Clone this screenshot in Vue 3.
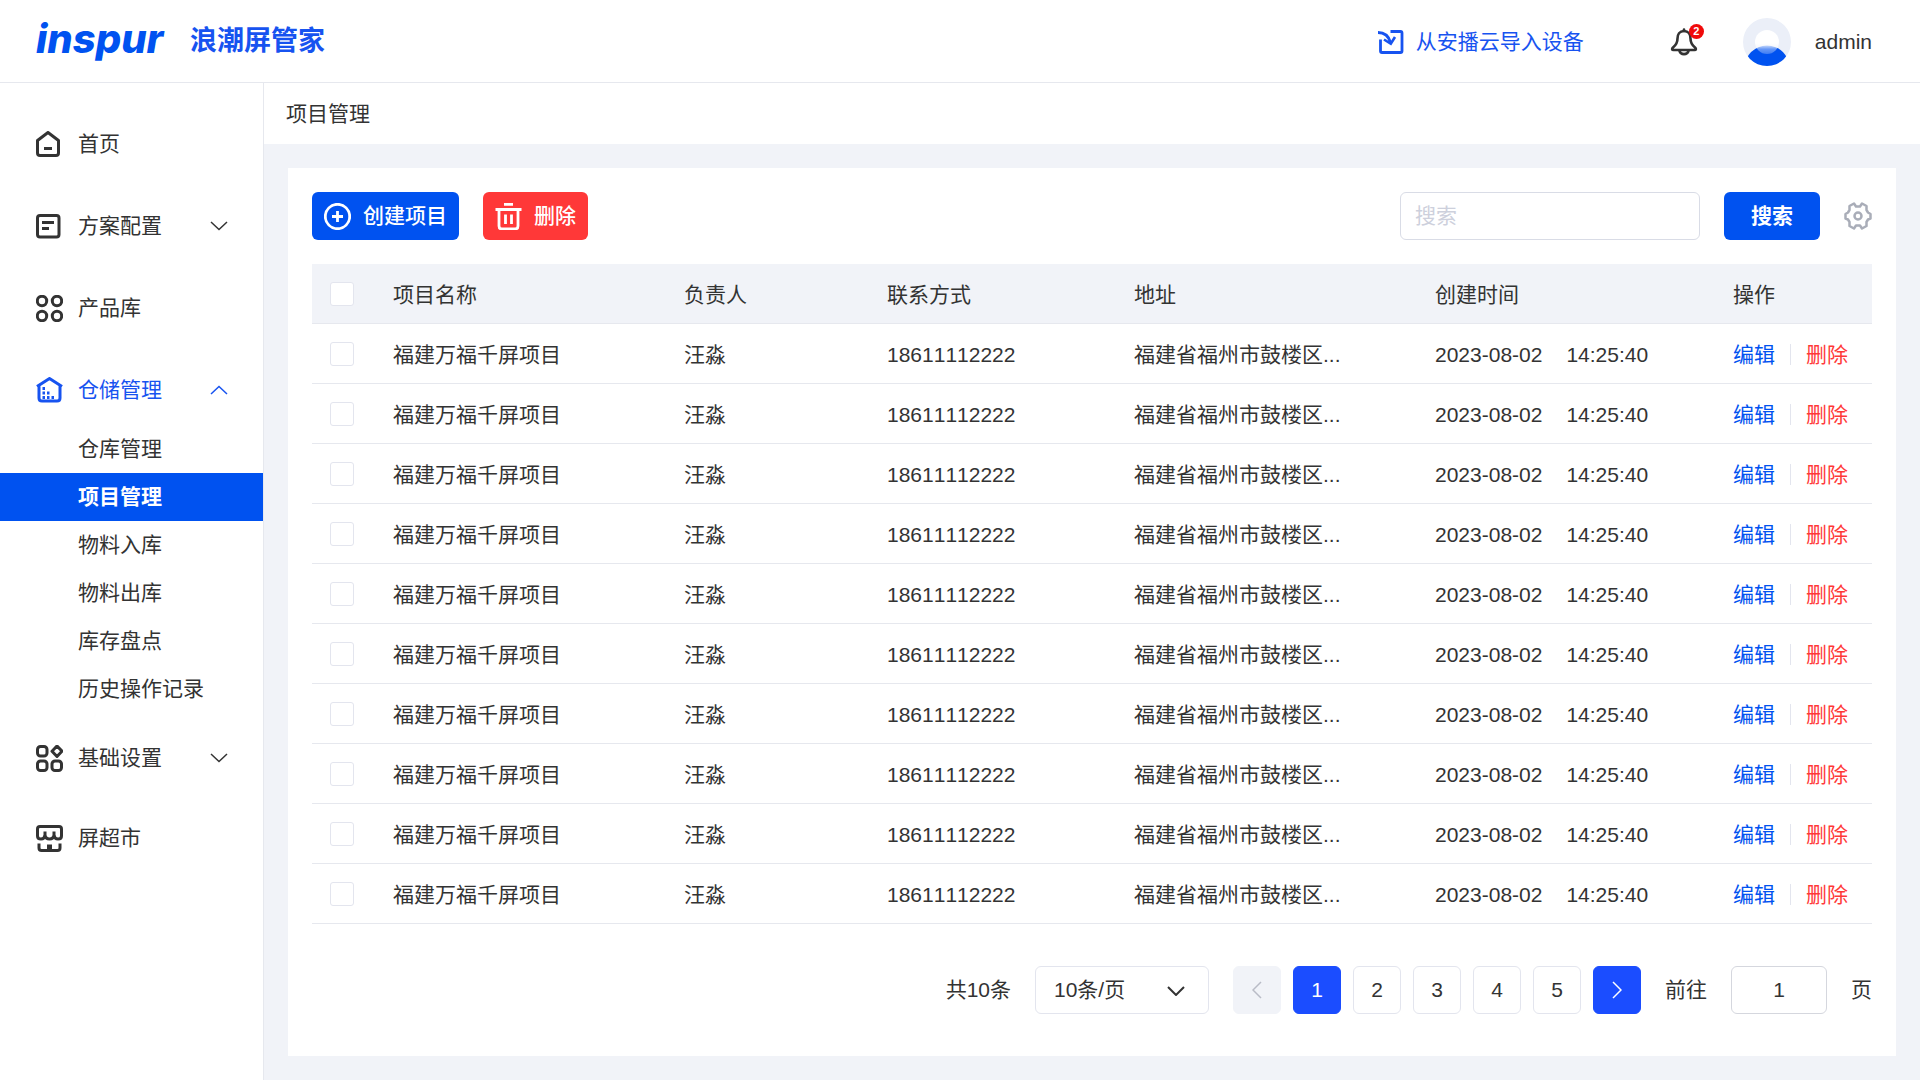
<script setup>
import { ref } from 'vue'

const submenu = ['仓库管理', '项目管理', '物料入库', '物料出库', '库存盘点', '历史操作记录']
const activeSub = ref('项目管理')

const rows = ref(
  Array.from({ length: 10 }, (_, i) => ({
    id: i + 1,
    name: '福建万福千屏项目',
    owner: '汪淼',
    phone: '18611112222',
    address: '福建省福州市鼓楼区...',
    date: '2023-08-02',
    time: '14:25:40',
    checked: false,
  }))
)
const allChecked = ref(false)
const toggleAll = () => rows.value.forEach((r) => (r.checked = allChecked.value))

const keyword = ref('')
const pageSize = ref('10')
const page = ref(1)
const jumpTo = ref('1')
</script>

<template>
  <div class="app">
    <header class="topbar">
      <span class="logo">inspur</span>
      <h1 class="product">浪潮屏管家</h1>
      <a class="import" href="#">
        <svg width="26" height="26" viewBox="0 0 26 26" fill="none" stroke="currentColor" stroke-width="2.800">
          <path d="M12.500 2.500H22.500Q24 2.500 24 4V22Q24 23.500 22.500 23.500H4Q2.500 23.500 2.500 22V10.500" />
          <path d="M0 3.500C6 3.500 10.500 6.500 12.500 13.500" />
          <path d="M6 10.500L12.800 14.800L17 8" stroke-width="2.600" />
        </svg>
        <span>从安播云导入设备</span>
      </a>
      <button class="bell" type="button" aria-label="通知">
        <svg width="28" height="28" viewBox="0 0 28 28" fill="none" stroke="currentColor" stroke-width="2.600" stroke-linejoin="round" stroke-linecap="round">
          <path d="M14 3C9.500 3 7.500 6.500 7.500 10.500C7.500 15.500 5.500 17.500 3 19.500C1.500 21 2 22 3.500 22H24.500C26 22 26.500 21 25 19.500C22.500 17.500 20.500 15.500 20.500 10.500C20.500 6.500 18.500 3 14 3Z" />
          <path d="M14 1.500V3" />
          <path d="M9.500 23C10.500 27.200 17.500 27.200 18.500 23" />
        </svg>
        <span class="badge">2</span>
      </button>
      <div class="user">
        <svg width="48" height="48" viewBox="0 0 48 48">
          <defs>
            <clipPath id="face"><circle cx="24" cy="24" r="24" /></clipPath>
            <linearGradient id="head" x1="0" y1="0" x2="0" y2="1">
              <stop offset="0" stop-color="#fff" />
              <stop offset=".55" stop-color="#fff" />
              <stop offset=".8" stop-color="#fff" stop-opacity=".4" />
              <stop offset="1" stop-color="#fff" stop-opacity=".25" />
            </linearGradient>
          </defs>
          <g clip-path="url(#face)">
            <rect width="48" height="48" fill="#ebeff8" />
            <circle cx="24" cy="50" r="22.500" fill="#0052f0" />
            <circle cx="24" cy="24" r="12" fill="url(#head)" />
          </g>
        </svg>
        <span>admin</span>
      </div>
    </header>

    <div class="body">
      <nav class="sidebar">
        <div class="group">
          <a class="item" href="#">
            <svg class="icon" viewBox="0 0 27 27"><path d="M1.500 9.500L12 1.500L22.500 9.500V22Q22.500 24.500 20 24.500H4Q1.500 24.500 1.500 22Z" /><path d="M8 17.500H16" /></svg>
            <span>首页</span>
          </a>
          <a class="item" href="#">
            <svg class="icon" viewBox="0 0 27 27"><rect x="1.500" y="2.500" width="21.500" height="21.500" rx="2.500" /><path d="M6 9.500H18M6 15.500H13" /></svg>
            <span>方案配置</span>
            <svg class="chev" viewBox="0 0 18 10"><path d="M1 1L9 8.500L17 1" /></svg>
          </a>
          <a class="item" href="#">
            <svg class="icon" viewBox="0 0 27 27"><circle cx="6" cy="6" r="4.700" /><circle cx="21" cy="6" r="4.700" /><circle cx="6" cy="21" r="4.700" /><circle cx="21" cy="21" r="4.700" /></svg>
            <span>产品库</span>
          </a>
          <a class="item open" href="#">
            <svg class="icon" viewBox="0 0 27 27">
              <path d="M1 9.500L13.500 1.500L26 9.500M3 9V21Q3 24 6 24H21Q24 24 24 21V9" />
              <path d="M6.500 11.500H9M6.500 16H9M11 16H13.500M6.500 20.500H9M11 20.500H13.500M15.500 20.500H18" />
            </svg>
            <span>仓储管理</span>
            <svg class="chev" viewBox="0 0 18 10"><path d="M1 9L9 1.500L17 9" /></svg>
          </a>
        </div>
        <div class="submenu">
          <a v-for="s in submenu" :key="s" href="#" :class="{ active: s === activeSub }" @click.prevent="activeSub = s">{{ s }}</a>
        </div>
        <div class="group lower">
          <a class="item" href="#">
            <svg class="icon" viewBox="0 0 27 27"><rect x="1.500" y="1.500" width="9.500" height="9.500" rx="3" /><path d="M21 1L26 6.200L21 11.500L16 6.200Z" /><rect x="1.500" y="16" width="9.500" height="9.500" rx="3" /><rect x="16" y="16" width="9.500" height="9.500" rx="3" /></svg>
            <span>基础设置</span>
            <svg class="chev" viewBox="0 0 18 10"><path d="M1 1L9 8.500L17 1" /></svg>
          </a>
          <a class="item" href="#">
            <svg class="icon" viewBox="0 0 27 27">
              <path d="M4 1.500H23Q25.500 1.500 25.500 4V11Q25.500 14 22 14Q18.500 14 18 10V6.500M18 10Q17.500 14 13.500 14Q9.500 14 9 10V6.500M9 10Q8.500 14 5 14Q1.500 14 1.500 11V4Q1.500 1.500 4 1.500" />
              <path d="M3 18.500V23Q3 25.500 5.500 25.500H21.500Q24 25.500 24 23V18.500" />
              <path d="M13.500 19.500V25" stroke-width="5" />
            </svg>
            <span>屏超市</span>
          </a>
        </div>
      </nav>

      <div class="content">
        <div class="crumb">项目管理</div>
        <main class="card">
          <div class="toolbar">
            <button class="btn" type="button">
              <svg class="btn-icon" viewBox="0 0 27 27"><circle cx="13.500" cy="13.500" r="12.200" /><path d="M13.500 8V19M8 13.500H19" /></svg>
              <span>创建项目</span>
            </button>
            <button class="btn danger" type="button">
              <svg class="btn-icon" viewBox="0 0 27 27"><path d="M9 1.300H18M.5 6.500H26.500M4 7V23Q4 26 7 26H20Q23 26 23 23V7M10.500 11.500V21M16.500 11.500V21" /></svg>
              <span>删除</span>
            </button>
            <input v-model="keyword" class="search" type="text" placeholder="搜索" aria-label="搜索" />
            <button class="btn find" type="button">搜索</button>
            <button class="gear" type="button" aria-label="设置">
              <svg width="28" height="28" viewBox="0 0 28 28" fill="none" stroke="currentColor" stroke-width="2.500" stroke-linejoin="round">
                <path d="M10 1.500L12 4.500H16L18 1.500L22.500 4V8L24 10.500L26.500 12V16.500L24 17.500L22.500 20V24L18 26.500L16 23.500H12L10 26.500L5.500 24V20L4 17.500L1.500 16.500V12L4 10.500L5.500 8V4Z" />
                <circle cx="14" cy="14" r="3.500" />
              </svg>
            </button>
          </div>

          <table>
            <colgroup>
              <col class="c-check" /><col class="c-name" /><col class="c-owner" /><col class="c-phone" />
              <col class="c-addr" /><col class="c-time" /><col class="c-ops" />
            </colgroup>
            <thead>
              <tr>
                <th class="check"><input v-model="allChecked" type="checkbox" aria-label="全选" @change="toggleAll" /></th>
                <th>项目名称</th>
                <th>负责人</th>
                <th>联系方式</th>
                <th>地址</th>
                <th>创建时间</th>
                <th>操作</th>
              </tr>
            </thead>
            <tbody>
              <tr v-for="r in rows" :key="r.id">
                <td class="check"><input v-model="r.checked" type="checkbox" :aria-label="'选择' + r.name" /></td>
                <td>{{ r.name }}</td>
                <td>{{ r.owner }}</td>
                <td>{{ r.phone }}</td>
                <td>{{ r.address }}</td>
                <td><span class="date">{{ r.date }}</span><span>{{ r.time }}</span></td>
                <td>
                  <div class="ops">
                    <a href="#">编辑</a>
                    <a class="del" href="#">删除</a>
                  </div>
                </td>
              </tr>
            </tbody>
          </table>

          <div class="pager">
            <span>共10条</span>
            <div class="size">
              <select v-model="pageSize" aria-label="每页条数">
                <option value="10">10条/页</option>
                <option value="20">20条/页</option>
              </select>
              <svg viewBox="0 0 18 10"><path d="M1 1L9 9L17 1" /></svg>
            </div>
            <div class="pages">
              <button class="prev" type="button" aria-label="上一页" disabled>
                <svg viewBox="0 0 10 18"><path d="M9 1L1 9L9 17" /></svg>
              </button>
              <button v-for="n in 5" :key="n" type="button" :class="{ current: n === page }" @click="page = n">{{ n }}</button>
              <button class="current" type="button" aria-label="下一页">
                <svg viewBox="0 0 10 18"><path d="M1 1L9 9L1 17" /></svg>
              </button>
            </div>
            <label for="jump">前往</label>
            <input id="jump" v-model="jumpTo" class="jump" type="text" />
            <span>页</span>
          </div>
        </main>
      </div>
    </div>
  </div>
</template>

<style>
body {
  margin: 0;
  background: #f1f3f8;
}
</style>

<style scoped>
.app {
  min-height: 100vh;
  display: flex;
  flex-direction: column;
  font-family: "Liberation Sans", "Noto Sans CJK SC", sans-serif;
  font-size: 21px;
  font-kerning: none;
  line-height: 32px;
  color: #333;
}
.app * {
  box-sizing: border-box;
}
a {
  color: inherit;
  text-decoration: none;
}
button,
input,
select {
  font: inherit;
  font-kerning: none;
  color: inherit;
  margin: 0;
}
button {
  border: 0;
  padding: 0;
  background: none;
  cursor: pointer;
}
svg {
  display: block;
  flex: none;
}

/* top bar */
.topbar {
  display: flex;
  align-items: center;
  height: 83px;
  padding: 2px 48px 0 36px;
  background: #fff;
  border-bottom: 1px solid #e6e8ee;
}
.logo {
  width: 154px;
  padding-bottom: 6px;
  font-family: Inter, sans-serif;
  font-size: 40px;
  font-weight: 800;
  font-style: italic;
  color: #0052f0;
}
.product {
  margin: 0 auto 0 0;
  padding-bottom: 2px;
  font-size: 27px;
  font-weight: 700;
  color: #1753f0;
}
.import {
  display: flex;
  align-items: center;
  gap: 12px;
  margin-right: 86px;
  color: #1753f0;
}
.bell {
  position: relative;
  margin-right: 45px;
}
.badge {
  position: absolute;
  top: -4px;
  right: -6px;
  width: 15px;
  height: 15px;
  border-radius: 50%;
  background: #f00a0a;
  color: #fff;
  font-size: 11px;
  font-weight: 700;
  line-height: 15px;
  text-align: center;
}
.user {
  display: flex;
  align-items: center;
  gap: 24px;
}

.body {
  flex: 1;
  display: flex;
}

/* sidebar */
.sidebar {
  flex: none;
  width: 264px;
  padding-top: 26px;
  background: #fff;
  border-right: 1px solid #e6e8ee;
}
.group {
  display: flex;
  flex-direction: column;
  gap: 12px;
}
.lower {
  gap: 10px;
  padding-top: 10px;
}
.item {
  display: flex;
  align-items: center;
  gap: 15px;
  height: 70px;
  padding: 0 35px 0 36px;
}
.open {
  color: #1753f0;
}
.icon {
  width: 27px;
  height: 27px;
  fill: none;
  stroke: currentColor;
  stroke-width: 3;
  stroke-linejoin: round;
}
.chev {
  width: 18px;
  height: 10px;
  margin-left: auto;
  fill: none;
  stroke: currentColor;
  stroke-width: 1.5;
}
.submenu a {
  display: block;
  height: 48px;
  padding-left: 78px;
  line-height: 48px;
}
.submenu .active {
  background: #0052f0;
  color: #fff;
  font-weight: 700;
}

/* content */
.content {
  flex: 1;
  min-width: 0;
}
.crumb {
  height: 61px;
  padding-left: 22px;
  background: #fff;
  line-height: 61px;
}
.card {
  margin: 24px;
  padding: 24px 24px 42px;
  background: #fff;
}
.toolbar {
  display: flex;
  align-items: center;
  gap: 24px;
  margin-bottom: 24px;
}
.btn {
  display: flex;
  align-items: center;
  justify-content: center;
  gap: 12px;
  height: 48px;
  padding: 0 12px;
  border-radius: 6px;
  background: #0052f0;
  color: #fff;
  font-weight: 500;
}
.danger {
  background: #ff3838;
}
.find {
  width: 96px;
  font-weight: 700;
}
.btn-icon {
  width: 27px;
  height: 27px;
  fill: none;
  stroke: currentColor;
  stroke-width: 2.8;
}
.search {
  width: 300px;
  height: 48px;
  margin-left: auto;
  padding: 0 14px;
  border: 1px solid #d9dce6;
  border-radius: 6px;
  background: #fff;
}
.search::placeholder {
  color: #cdd0dc;
}
.gear {
  color: #a9adb8;
}

table {
  width: 100%;
  table-layout: fixed;
  border-collapse: separate;
  border-spacing: 0;
}
.c-check { width: 81px; }
.c-name { width: 291px; }
.c-owner { width: 203px; }
.c-phone { width: 247px; }
.c-addr { width: 301px; }
.c-time { width: 298px; }
.c-ops { width: 139px; }
th,
td {
  height: 60px;
  padding: 2px 0 0;
  border-bottom: 1px solid #e6e8ee;
  font-weight: 400;
  text-align: left;
  white-space: nowrap;
}
th {
  background: #f1f3f8;
}
.check {
  padding: 0 0 0 18px;
}
.check input {
  display: block;
  appearance: none;
  width: 24px;
  height: 24px;
  border: 1px solid #e3e5ee;
  border-radius: 3px;
  background: #fff;
}
.check input:checked {
  background: #0052f0;
}
.date {
  margin-right: 24px;
}
.ops {
  display: flex;
  align-items: center;
  color: #0052f0;
}
.del {
  display: flex;
  align-items: center;
  color: #ff3838;
}
.del::before {
  content: "";
  width: 1px;
  height: 21px;
  margin: 0 15px;
  background: #e3e5ee;
}

/* pagination */
.pager {
  display: flex;
  align-items: center;
  justify-content: flex-end;
  gap: 24px;
  margin-top: 42px;
}
.size {
  position: relative;
}
.size select {
  display: block;
  appearance: none;
  width: 174px;
  height: 48px;
  padding: 0 18px;
  border: 1px solid #e3e5ee;
  border-radius: 6px;
  background: #fff;
}
.size svg {
  position: absolute;
  top: 20px;
  right: 24px;
  width: 18px;
  height: 10px;
  pointer-events: none;
}
.pager svg {
  fill: none;
  stroke: currentColor;
  stroke-width: 2;
}
.pages {
  display: flex;
  gap: 12px;
}
.pages button {
  display: flex;
  align-items: center;
  justify-content: center;
  width: 48px;
  height: 48px;
  border: 1px solid #e3e5ee;
  border-radius: 6px;
}
.pages svg {
  width: 10px;
  height: 18px;
  stroke-width: 1.5;
}
.pages .prev {
  border-color: #f1f3f8;
  background: #f1f3f8;
  color: #b9bcc6;
}
.pages .current {
  border-color: #1b4dff;
  background: #1b4dff;
  color: #fff;
}
.jump {
  width: 96px;
  height: 48px;
  border: 1px solid #d5d7de;
  border-radius: 6px;
  text-align: center;
}
</style>
